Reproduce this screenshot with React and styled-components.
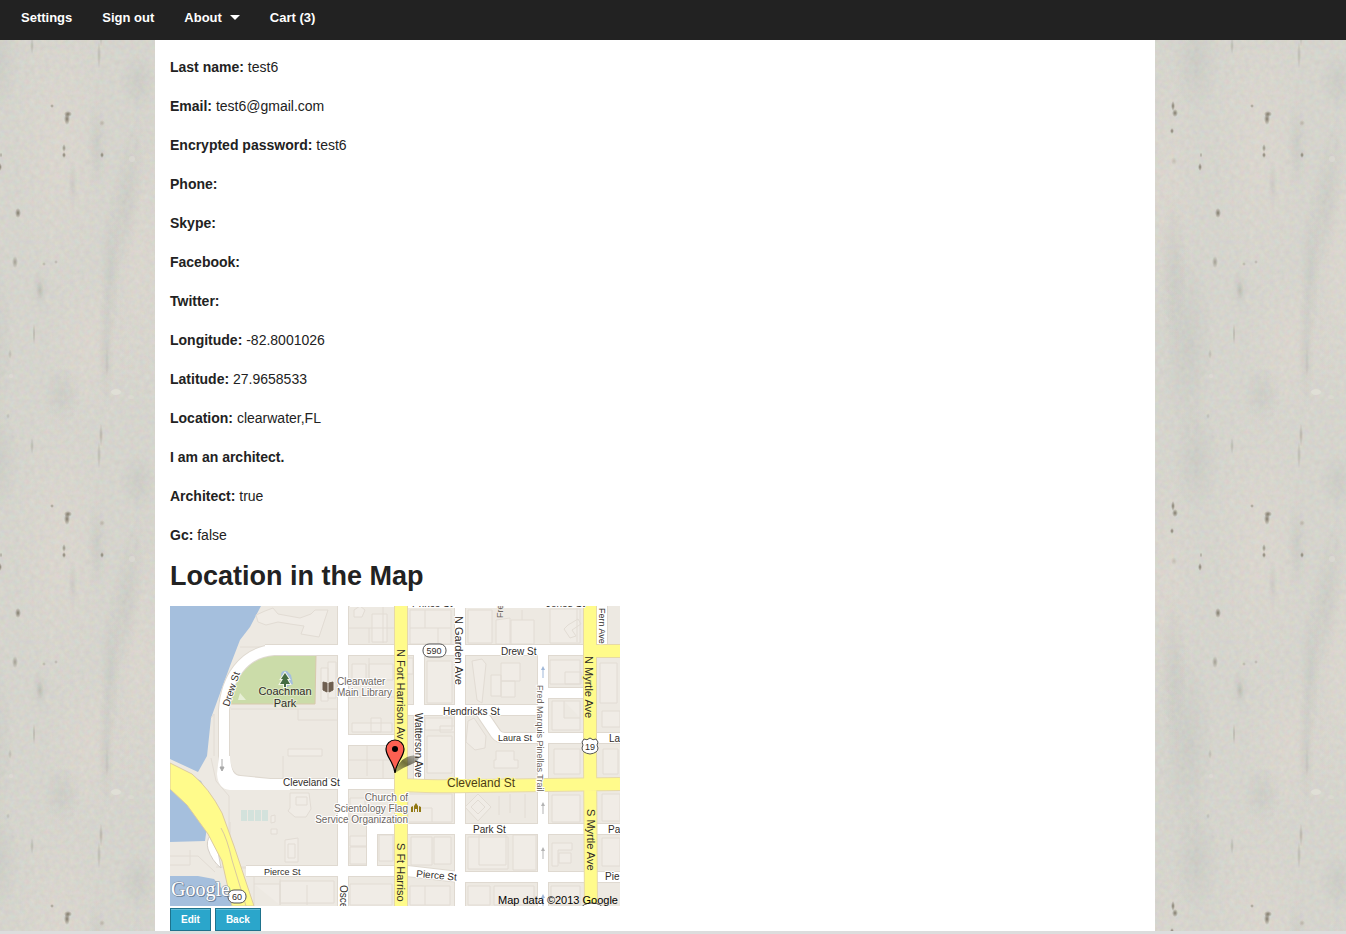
import React from "react";
import styled, { createGlobalStyle, css } from "styled-components";

// The veins are repeated on all eight sides so that the tile joins without a seam.
const tileOffsets = [-400, 0, 400].flatMap((x) => [-400, 0, 400].map((y) => [x, y]));

const marbleTile = `
<svg xmlns="http://www.w3.org/2000/svg" width="400" height="400" viewBox="0 0 400 400">
  <defs>
    <radialGradient id="g"><stop offset="0" stop-color="#b8bcb8" stop-opacity=".4"/><stop offset="1" stop-color="#b8bcb8" stop-opacity="0"/></radialGradient>
    <radialGradient id="l"><stop offset="0" stop-color="#ddd7cf" stop-opacity=".7"/><stop offset="1" stop-color="#ddd7cf" stop-opacity="0"/></radialGradient>
    <radialGradient id="d"><stop offset="0" stop-color="#77705f" stop-opacity=".9"/><stop offset="1" stop-color="#77705f" stop-opacity="0"/></radialGradient>
    <filter id="n" x="0" y="0" width="100%" height="100%" color-interpolation-filters="sRGB">
      <feTurbulence type="fractalNoise" baseFrequency=".2" numOctaves="3" seed="8" stitchTiles="stitch"/>
      <feColorMatrix values=".4 0 0 0 .64  0 .4 0 0 .63  0 0 .4 0 .6  0 0 0 0 .16"/>
    </filter>
    <g id="v">
      <g fill="url(#l)">
        <ellipse cx="60" cy="145" rx="48" ry="150"/><ellipse cx="90" cy="345" rx="45" ry="80"/>
        <ellipse cx="140" cy="260" rx="30" ry="150"/><ellipse cx="368" cy="190" rx="30" ry="140"/>
      </g>
      <g fill="url(#g)">
        <ellipse cx="126" cy="200" rx="16" ry="85" transform="rotate(8 126 200)"/>
        <ellipse cx="110" cy="275" rx="10" ry="70"/><ellipse cx="138" cy="82" rx="18" ry="30"/>
        <ellipse cx="388" cy="345" rx="26" ry="100"/><ellipse cx="396" cy="60" rx="24" ry="55"/>
        <ellipse cx="374" cy="270" rx="14" ry="80"/><ellipse cx="97" cy="145" rx="10" ry="45"/>
        <ellipse cx="62" cy="395" rx="18" ry="30"/><ellipse cx="106" cy="350" rx="8" ry="60"/>
        <ellipse cx="40" cy="290" rx="8" ry="24"/><ellipse cx="73" cy="185" rx="5" ry="25"/>
      </g>
    </g>
  </defs>
  <rect width="400" height="400" fill="#d5d4cd"/>
  ${tileOffsets.map(([x, y]) => `<use href="#v" x="${x}" y="${y}"/>`).join("")}
  <rect width="400" height="400" filter="url(#n)"/>
  <g fill="url(#d)">
    <ellipse cx="68" cy="114" rx="4" ry="3"/><ellipse cx="67" cy="119" rx="3" ry="6"/>
    <ellipse cx="64" cy="148" rx="2" ry="4" opacity=".8"/><ellipse cx="64" cy="155" rx="2" ry="3"/>
    <ellipse cx="102" cy="155" rx="2" ry="3"/><ellipse cx="102" cy="123" rx="3" ry="3" opacity=".35"/>
    <ellipse cx="18" cy="213" rx="3" ry="5"/><ellipse cx="15" cy="262" rx="3" ry="6" opacity=".6"/>
    <ellipse cx="52" cy="106" rx="2" ry="2" opacity=".7"/><ellipse cx="56" cy="262" rx="2" ry="2" opacity=".4"/>
    <ellipse cx="44" cy="264" rx="2" ry="2" opacity=".4"/><ellipse cx="40" cy="290" rx="4" ry="9" opacity=".2"/>
    <ellipse cx="34" cy="334" rx="1" ry="12" opacity=".5"/><ellipse cx="101" cy="35" rx="2" ry="12" opacity=".35"/>
    <ellipse cx="99" cy="55" rx="2" ry="14" opacity=".3"/><ellipse cx="32" cy="46" rx="2" ry="8" opacity=".35"/>
    <ellipse cx="8" cy="16" rx="2" ry="3" opacity=".3"/><ellipse cx="10" cy="354" rx="2" ry="5" opacity=".3"/>
    <ellipse cx="1" cy="155" rx="1" ry="3" opacity=".8"/><ellipse cx="0" cy="167" rx="2" ry="4"/>
    <ellipse cx="400" cy="167" rx="2" ry="4"/>
    <ellipse cx="373" cy="106" rx="2" ry="5"/><ellipse cx="375" cy="113" rx="3" ry="4"/>
    <ellipse cx="372" cy="131" rx="2" ry="3"/><ellipse cx="374" cy="161" rx="3" ry="4" opacity=".25"/>
    <ellipse cx="107" cy="362" rx="2" ry="16" opacity=".15"/>
  </g>
  <g fill="#e2e1d8"><ellipse cx="116" cy="392" rx="5" ry="3" opacity=".8"/><ellipse cx="131" cy="397" rx="3" ry="2" opacity=".4"/><ellipse cx="132" cy="159" rx="3" ry="3" opacity=".5"/><ellipse cx="11" cy="376" rx="2" ry="2" opacity=".5"/></g>
</svg>`;

const GlobalStyle = createGlobalStyle`
  *, *::before, *::after { box-sizing: border-box; }
  body {
    margin: 0;
    color: #222;
    font: 14px/22px "Liberation Sans", Arial, sans-serif;
    background: #d5d4cd url("data:image/svg+xml,${encodeURIComponent(marbleTile).replace(/\(/g, "%28").replace(/\)/g, "%29")}") 0 0 / 400px 400px;
  }
`;

const TopBar = styled.nav`
  height: 40px;
  padding: 0 21px;
  display: flex;
  align-items: flex-start;
  gap: 30px;
  background: #222;
`;

const navItem = css`
  display: flex;
  align-items: center;
  gap: 8px;
  padding: 0;
  border: 0;
  background: none;
  color: #fff;
  font: bold 13px/35px "Liberation Sans", Arial, sans-serif;
  text-decoration: none;
  cursor: pointer;
`;

const NavLink = styled.a`
  ${navItem}
`;

const NavMenuButton = styled.button`
  ${navItem}
`;

const Caret = styled.span`
  border: 5px solid transparent;
  border-top-color: #fff;
  border-bottom: 0;
`;

const Page = styled.div`
  padding-right: 36px;
`;

const Sheet = styled.main`
  max-width: 1000px;
  margin: 0 auto;
  padding: 16px 15px 0;
  background: #fff;
`;

const Field = styled.p`
  margin: 0 0 17px;
`;

const Heading = styled.h3`
  margin: 0 0 17px;
  font-size: 27px;
  line-height: 26px;
`;

const MapDrawing = styled.svg`
  display: block;
  width: 450px;
  max-width: 100%;
  height: auto;
  font-family: "Liberation Sans", Arial, sans-serif;
`;

const Label = styled.text`
  font-size: ${(p) => p.$size || 10}px;
  fill: ${(p) => p.$tone || "#302c28"};
  stroke: ${(p) => p.$halo || "#fff"};
  stroke-width: ${(p) => (p.$halo === "none" ? 0 : 2)}px;
  stroke-linejoin: round;
  paint-order: stroke;
`;

const Actions = styled.div`
  display: flex;
  gap: 4px;
  padding-top: 2px;
`;

const ActionLink = styled.a`
  padding: 0 10px;
  border: 1px solid #1e728c;
  background: #2ba6cb;
  box-shadow: inset 0 1px 0 rgba(255, 255, 255, 0.25);
  color: #fff;
  font-size: 10px;
  font-weight: bold;
  line-height: 21px;
  text-decoration: none;
`;

const Footer = styled.footer`
  height: 3px;
  background: #ddd;
`;

const fields = [
  ["Last name:", "test6"],
  ["Email:", "test6@gmail.com"],
  ["Encrypted password:", "test6"],
  ["Phone:", ""],
  ["Skype:", ""],
  ["Facebook:", ""],
  ["Twitter:", ""],
  ["Longitude:", "-82.8001026"],
  ["Latitude:", "27.9658533"],
  ["Location:", "clearwater,FL"],
  ["I am an architect.", ""],
  ["Architect:", "true"],
  ["Gc:", "false"],
];

const roads = [
  "M173 0V300",
  "M290 0V300",
  "M249 45V176",
  "M373 45V300",
  "M432 0V40",
  "M95 44H414",
  "M237 104H368",
  "M178 134H225",
  "M378 87H414",
  "M378 132H450",
  "M311 106L326 128Q329 132 335 132H373",
  "M237 223H450",
  "M202 261V223H225",
  "M289 271H450",
  "M76 265H225",
  "M237 265L289 271",
];

const westLoop = "M225 178L100 178L70 175Q55 174 54 150V104C56 73 73 46 104 44";
const mainRoads = "M231 0V300M420 0V150L421 300M231 179Q270 181 300 180L450 178M426 45H450";

function MapText({ x, y, turn, ...rest }) {
  return turn ? (
    <Label transform={`translate(${x} ${y}) rotate(${turn})`} {...rest} />
  ) : (
    <Label x={x} y={y} {...rest} />
  );
}

function Arrow({ x, y, color }) {
  return (
    <g stroke={color} fill={color}>
      <path d={`M${x} ${y + 12}V${y + 3}`} />
      <path d={`M${x - 2} ${y + 4}L${x} ${y}L${x + 2} ${y + 4}Z`} stroke="none" />
    </g>
  );
}

function LocationMap() {
  return (
    <MapDrawing viewBox="0 0 450 300" role="img" aria-label="Map of Clearwater, FL">
      <defs>
        <linearGradient id="pinShade" x1="0" y1="1" x2="1" y2="0">
          <stop offset="0" stopColor="#24240f" stopOpacity="0.3" />
          <stop offset="0.5" stopColor="#24240f" stopOpacity="0.65" />
          <stop offset="1" stopColor="#24240f" stopOpacity="0.25" />
        </linearGradient>
      </defs>
      <rect width="450" height="300" fill="#ede9e2" />
      <g fill="#a5bfdd">
        <path d="M0 0H91L80 21L70 34L60 60L41 112L37 150L28 166L0 153Z" />
        <path d="M18 168L31 175L37 187L40 200L35 235L0 236V180Z" />
        <path d="M0 270H28L44 273L66 300H0Z" />
      </g>
      <g fill="#f0ece6" stroke="#e2dcd4" strokeWidth="1">
        <path d="M95 5L103 2L108 8L130 12L141 8L145 4L158 4L149 31L131 28L134 20L120 18L108 16L96 19L88 16L86 9Z" />
        <path d="M184 4L190 0L195 4L192 11H184ZM202 8H217V36H202Z" />
        <path d="M151 62H158V95H151ZM158 56H166V92H158Z" />
        <path d="M182 58H196V74H182ZM199 58H223V74H199ZM182 117H222V126H182ZM201 112H211V126H201Z" />
        <path d="M120 187V202L118 205L125 211H136L141 203L139 187Z" />
        <path d="M115 234L128 232V256H115ZM118 238H125V252H118Z" />
        <path d="M118 143H152V150H118ZM126 191H137V199H126Z" />
        <path d="M101 210L105 209V216L101 217ZM101 223H107V228H101Z" />
        <path d="M240 4H281V38H240ZM255 4V22H240M255 22H281M268 22V38M298 4H322V37H298ZM326 14L340 12V38H326ZM341 14H364V38H341ZM352 4V14" />
        <path d="M380 3H410V37H380ZM398 19L408 13L411 18L402 24L406 30L400 32L394 23Z" />
        <path d="M238 52H243V68H238M257 55H282V97H257ZM302 55L312 53L316 58L312 97L307 94ZM331 57H350V75H331ZM321 69H331V90H321ZM331 75H345V91H331Z" />
        <path d="M380 54H410V78H380ZM395 66H411V78H395ZM382 95H410V124H382ZM394 95V112H410" />
        <path d="M430 57H447V97H430ZM432 105H450V121H432Z" />
        <path d="M255 112H282V124H255ZM270 120H286V126H270ZM257 130H282V167H257ZM298 115L304 112L316 130L315 142L305 144L296 136ZM326 145H344V154H348V162H324V154H326Z" />
        <path d="M308 188L321 201L308 215L295 201ZM308 194L315 201L308 208L301 201ZM329 190V209M340 188V207M355 188V212" />
        <path d="M238 188H282V216H238ZM241 202H262V216M241 231H262V259H241ZM264 231H281V258H264ZM298 231H338V263H298ZM309 229H336V259H309ZM343 229H366V264H343Z" />
        <path d="M382 237H402V244H388V260H382ZM389 247H401V257H389ZM382 189H410V216H382ZM381 280H410V299H381Z" />
        <path d="M240 280H280V299H240ZM255 280V299M298 280H320V299H298ZM324 280H364V299H324Z" />
        <path d="M180 192H195V214H180ZM180 230H197V240H180ZM180 241H197V258H180ZM209 229H223V255H209ZM180 278H222V299H180ZM84 278H110V299M110 275H164V297H110Z" />
        <path d="M432 188H450V215H432ZM432 232H450V260H432ZM433 143H448V168H433ZM384 143H410V168H384Z" />
      </g>
      <g fill="none" stroke="#e2dcd4">
        <path d="M41 152L46 175L59 190V262H76M61 103H168M128 103V114H168M0 250H28L45 266M113 174V150M60 216V258M46 261H76M70 41H95M41 112L44 108V150M0 259H20V244" />
        <path d="M84 270V299M110 273V299M137 279V299M213 0V37M225 22H178M199 22V37M407 0V36M178 91H225M199 52V91M178 154H225M197 140V170M213 154V174" />
      </g>
      <path d="M71 204H77V215H71ZM78 204H84V215H78ZM85 204H91V215H85ZM92 204H98V215H92Z" fill="#d3e2dc" />

      <path d="M61 98C62 72 78 50 101 49H146L145 98Z" fill="#cbdca9" stroke="#d8c9ac" strokeWidth="1" />
      <path d="M111 68Q112 64 117 65L121 69L123 78L117 81L112 76Z" fill="#a5bfdd" />
      <path d="M70 87L76 94L68 94Z" fill="#e7efd6" />

      <g fill="none" stroke="#dfd9d0" strokeWidth="12">
        {roads.map((d) => <path key={d} d={d} />)}
        <path d={westLoop} />
      </g>
      <g fill="none" stroke="#fff" strokeWidth="10">
        {roads.map((d) => <path key={d} d={d} />)}
        <path d={westLoop} />
      </g>
      <path d="M49 150L47 168Q48 183 60 184H120V173H72Q61 172 60 150Z" fill="#fff" />
      <path d="M237 0H414V2H237ZM180 0H225V1H180Z" fill="#fff" />
      <path d="M40 230Q36 235 38 243Q42 255 51 262L47 240Z" fill="#fff" stroke="#d5cfc8" />

      <path d={mainRoads} fill="none" stroke="#e6d9a8" strokeWidth="14" />
      <path d="M0 157L22 168Q39 182 52 207L64 240L84 300H62L52 255L38 228L17 199L0 183Z" fill="#fffb8b" stroke="#ddcba0" />
      <path d={mainRoads} fill="none" stroke="#fffb8b" strokeWidth="12" />
      <path d="M51 222Q57 232 62 254L76 300" fill="none" stroke="#d9c8a0" />

      <Arrow x={373} y={60} color="#9fb7d8" />
      <Arrow x={373} y={196} color="#b3b3b3" />
      <Arrow x={373} y={241} color="#b3b3b3" />
      <Arrow x={373} y={288} color="#9fb7d8" />
      <path d="M52 153V162M50 161L52 165L54 161Z" fill="#a8a8a8" stroke="#a8a8a8" />

      <MapText x={59} y={101} turn={-72}>Drew St</MapText>
      <MapText x={115} y={89} $size={11} textAnchor="middle" $halo="#dce8c4">Coachman</MapText>
      <MapText x={115} y={101} $size={11} textAnchor="middle" $halo="#e4ead4">Park</MapText>
      <MapText x={167} y={79} $tone="#6d665f">Clearwater</MapText>
      <MapText x={167} y={90} $tone="#6d665f">Main Library</MapText>
      <MapText x={331} y={49}>Drew St</MapText>
      <MapText x={273} y={109}>Hendricks St</MapText>
      <MapText x={328} y={135} $size={9}>Laura St</MapText>
      <MapText x={439} y={136}>La</MapText>
      <MapText x={113} y={180}>Cleveland St</MapText>
      <MapText x={277} y={181} $size={12} $halo="#fffb8b" $tone="#4d3c14">Cleveland St</MapText>
      <MapText x={238} y={195} textAnchor="end" $tone="#6d665f">Church of</MapText>
      <MapText x={238} y={206} textAnchor="end" $tone="#6d665f">Scientology Flag</MapText>
      <MapText x={238} y={217} textAnchor="end" $tone="#6d665f">Service Organization</MapText>
      <MapText x={303} y={227}>Park St</MapText>
      <MapText x={438} y={227}>Pa</MapText>
      <MapText x={94} y={269} $size={9}>Pierce St</MapText>
      <MapText x={246} y={271} turn={5}>Pierce St</MapText>
      <MapText x={435} y={274}>Pie</MapText>
      <MapText x={242} y={1}>Prince St</MapText>
      <MapText x={376} y={1}>Jones St</MapText>
      <MapText x={333} y={12} turn={-90} $size={9} $halo="#f0ece6" $tone="#6d665f">Fre</MapText>
      <MapText x={227} y={43} turn={90} $size={11} $halo="#fffb8b">N Fort Harrison Av</MapText>
      <MapText x={227} y={237} turn={90} $size={11} $halo="#fffb8b">S Ft Harriso</MapText>
      <MapText x={285} y={10} turn={90} $size={11}>N Garden Ave</MapText>
      <MapText x={245} y={107} turn={90}>Watterson Ave</MapText>
      <MapText x={367} y={79} turn={90} $size={9} $tone="#6d665f">Fred Marquis Pinellas Trail</MapText>
      <MapText x={415} y={50} turn={90} $size={11} $halo="#fffb8b">N Myrtle Ave</MapText>
      <MapText x={417} y={203} turn={90} $size={11} $halo="#fffb8b">S Myrtle Ave</MapText>
      <MapText x={429} y={2} turn={90} $size={9}>Fern Ave</MapText>
      <MapText x={170} y={279} turn={90}>Osce</MapText>

      <path d="M115 67L111 73H113L110 78H114V81H116V78H120L117 73H119Z" fill="#456c43" stroke="#f3f6ea" strokeWidth="2" paintOrder="stroke" />
      <path d="M153 76L157 77V86L153 84ZM163 76L159 77V86L163 84Z" fill="#6e5f50" stroke="#6e5f50" strokeWidth="1" />
      <path d="M241 206V201L243 200V206ZM244 206V200L246 197L248 200V206H247V203H245V206ZM249 206V200L251 201V206Z" fill="#927914" />

      <g fill="#fff" stroke="#555">
        <rect x="253" y="38" width="23" height="13" rx="6" />
        <rect x="58" y="284" width="18" height="13" rx="6" />
        <path d="M414 133Q417 135 420 132Q423 135 426 133L428 136Q426 139 428 142Q428 147 420 148Q412 147 412 142Q414 139 412 136Z" />
        <ellipse cx="422" cy="303" rx="11" ry="6" />
      </g>
      <MapText x={264} y={48} $size={9} $halo="none" textAnchor="middle">590</MapText>
      <MapText x={67} y={294} $size={9} $halo="none" textAnchor="middle">60</MapText>
      <MapText x={420} y={144} $size={9} $halo="none" textAnchor="middle">19</MapText>

      <path d="M225 167Q228 155 237 151Q244 148 249 151Q249 155 242 158Q234 161 225 167Z" fill="url(#pinShade)" />
      <path d="M225 167C224 156 216 151 216 143A9 9 0 1 1 234 143C234 151 226 156 225 167Z" fill="#fc6052" stroke="#000" strokeWidth="1.2" />
      <circle cx="225" cy="143" r="3" fill="#000" />

      <g fontFamily="Liberation Serif, serif" fontSize="20">
        <text x="2" y="291" fill="#3f5674" opacity=".6">Google</text>
        <text x="1" y="290" fill="#fff" stroke="#7f8fa2" strokeWidth="1" paintOrder="stroke">Google</text>
      </g>
      <MapText x={448} y={298} $size={11} $tone="#000" $halo="none" textAnchor="end">Map data ©2013 Google</MapText>
    </MapDrawing>
  );
}

export default function App() {
  return (
    <>
      <GlobalStyle />
      <TopBar>
        <NavLink href="#settings">Settings</NavLink>
        <NavLink href="#signout">Sign out</NavLink>
        <NavMenuButton type="button" aria-haspopup="true">
          About <Caret />
        </NavMenuButton>
        <NavLink href="#cart">Cart (3)</NavLink>
      </TopBar>
      <Page>
        <Sheet>
          {fields.map(([name, value]) => (
            <Field key={name}>
              <b>{name}</b> {value}
            </Field>
          ))}
          <Heading>Location in the Map</Heading>
          <LocationMap />
          <Actions>
            <ActionLink href="#edit">Edit</ActionLink>
            <ActionLink href="#back">Back</ActionLink>
          </Actions>
        </Sheet>
      </Page>
      <Footer />
    </>
  );
}
